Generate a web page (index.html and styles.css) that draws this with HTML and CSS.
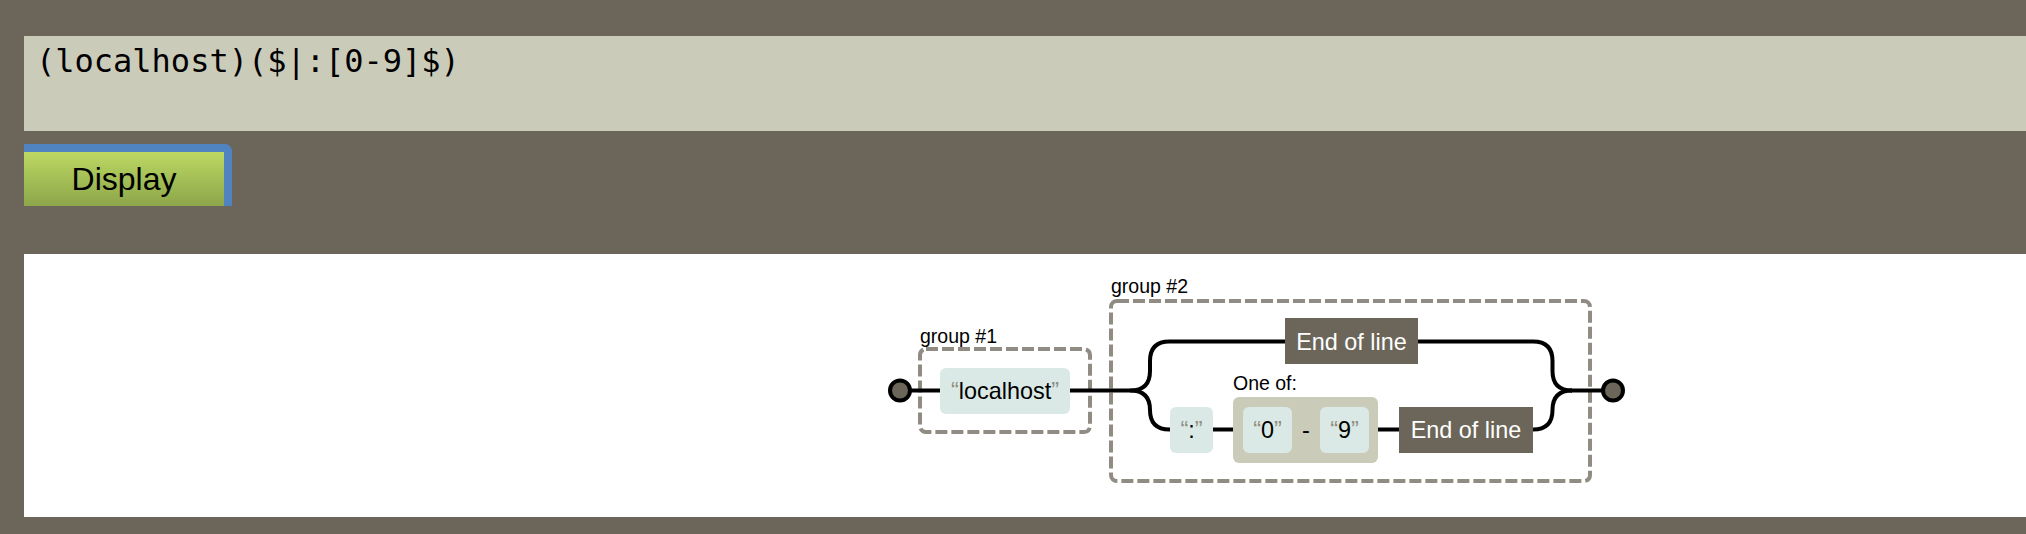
FILE: index.html
```html
<!DOCTYPE html>
<html lang="en">
<head>
<meta charset="utf-8">
<title>Regexper</title>
<link rel="stylesheet" href="styles.css">
</head>
<body>
<main class="page">
  <textarea class="regex" spellcheck="false">(localhost)($|:[0-9]$)</textarea>
  <div class="btn-clip"><button class="display" type="button">Display</button></div>
  <section class="results">
    <svg class="diagram" width="2002" height="263" viewBox="0 0 2002 263" xmlns="http://www.w3.org/2000/svg">
      <g transform="translate(-24,-254)">
        <!-- group #1 -->
        <rect class="subexp" x="920" y="349" width="170" height="83" rx="6"/>
        <text class="label" x="920" y="343">group #1</text>
        <!-- group #2 -->
        <rect class="subexp" x="1111" y="301" width="479" height="180" rx="6"/>
        <text class="label" x="1111" y="293">group #2</text>

        <!-- connecting lines -->
        <path class="line" d="M910,390.5 H940"/>
        <path class="line" d="M1070,390.5 H1131"/>
        <path class="line" d="M1130.5,390.5 q19.5,0 19.5,-19.5 V361 q0,-19.5 19.5,-19.5 H1285"/>
        <path class="line" d="M1418,341.5 H1533 q19.5,0 19.5,19.5 V371 q0,19.5 19.5,19.5"/>
        <path class="line" d="M1130.5,390.5 q19.5,0 19.5,19.5 q0,19.5 19.5,19.5 H1170"/>
        <path class="line" d="M1213,429.5 H1233"/>
        <path class="line" d="M1378,429.5 H1399"/>
        <path class="line" d="M1533,429.5 q19.5,0 19.5,-19.5 q0,-19.5 19.5,-19.5"/>
        <path class="line" d="M1571,390.5 H1603"/>

        <!-- anchors -->
        <circle class="anchor-dot" cx="900" cy="390.5" r="10"/>
        <circle class="anchor-dot" cx="1613" cy="390.5" r="10"/>

        <!-- literal localhost -->
        <rect class="literal" x="940" y="368" width="130" height="46" rx="6"/>
        <text class="node-text" x="1005" y="399"><tspan class="quote">“</tspan>localhost<tspan class="quote">”</tspan></text>

        <!-- End of line (top) -->
        <rect class="anchor" x="1285" y="318" width="133" height="46"/>
        <text class="node-text anchor-text" x="1351.5" y="349.5">End of line</text>

        <!-- literal : -->
        <rect class="literal" x="1170" y="407" width="43" height="46" rx="6"/>
        <text class="node-text" x="1191.5" y="438"><tspan class="quote">“</tspan>:<tspan class="quote">”</tspan></text>

        <!-- One of -->
        <text class="label" x="1233" y="390">One of:</text>
        <rect class="charset" x="1233" y="397" width="145" height="66" rx="6"/>
        <rect class="literal" x="1243" y="407" width="49" height="46" rx="6"/>
        <text class="node-text" x="1267.5" y="438"><tspan class="quote">“</tspan>0<tspan class="quote">”</tspan></text>
        <text class="node-text" x="1306" y="438">-</text>
        <rect class="literal" x="1320" y="407" width="49" height="46" rx="6"/>
        <text class="node-text" x="1344.5" y="438"><tspan class="quote">“</tspan>9<tspan class="quote">”</tspan></text>

        <!-- End of line (bottom) -->
        <rect class="anchor" x="1399" y="407" width="134" height="46"/>
        <text class="node-text anchor-text" x="1466" y="438">End of line</text>
      </g>
    </svg>
  </section>
</main>
</body>
</html>
```

FILE: styles.css
```css
html,
body {
  margin: 0;
  background: #6b6659;
}

body {
  height: 534px;
  overflow: hidden;
}

.page {
  display: flex;
  flex-direction: column;
  padding: 36px 0 0 24px;
}

.regex {
  display: block;
  box-sizing: border-box;
  width: 100%;
  height: 95px;
  margin: 0;
  padding: 6px 12px;
  border: 0;
  background: #cbcbba;
  color: #000;
  font-family: "DejaVu Sans Mono", monospace;
  font-size: 32px;
  line-height: normal;
  resize: none;
  outline: none;
}

.btn-clip {
  margin-top: 13px;
  width: 208px;
  height: 62px;
  overflow: hidden;
}

.display {
  display: block;
  box-sizing: content-box;
  width: 200px;
  height: 54px;
  margin: 0 0 0 -8px;
  padding: 0;
  border: 8px solid #4f84c1;
  border-radius: 7px;
  background: linear-gradient(#bcd862, #8ca64a);
  color: #000;
  font-family: "Liberation Sans", Arial, sans-serif;
  font-size: 32px;
  line-height: 54px;
}

.results {
  margin-top: 48px;
  height: 263px;
  background: #fff;
}

.diagram {
  display: block;
}

.line {
  fill: none;
  stroke: #000;
  stroke-width: 4;
}

.anchor-dot {
  fill: #6b6659;
  stroke: #000;
  stroke-width: 4;
}

.subexp {
  fill: none;
  stroke: #908c83;
  stroke-width: 4;
  stroke-dasharray: 12 4;
}

.literal {
  fill: #dae9e5;
}

.charset {
  fill: #cbcbba;
}

.anchor {
  fill: #6b6659;
}

.label {
  font-family: "Liberation Sans", Arial, sans-serif;
  font-size: 19.5px;
  fill: #000;
}

.node-text {
  font-family: "Liberation Sans", Arial, sans-serif;
  font-size: 23.4px;
  fill: #000;
  text-anchor: middle;
}

.anchor-text {
  fill: #fff;
}

.quote {
  fill: #908c83;
}
```
